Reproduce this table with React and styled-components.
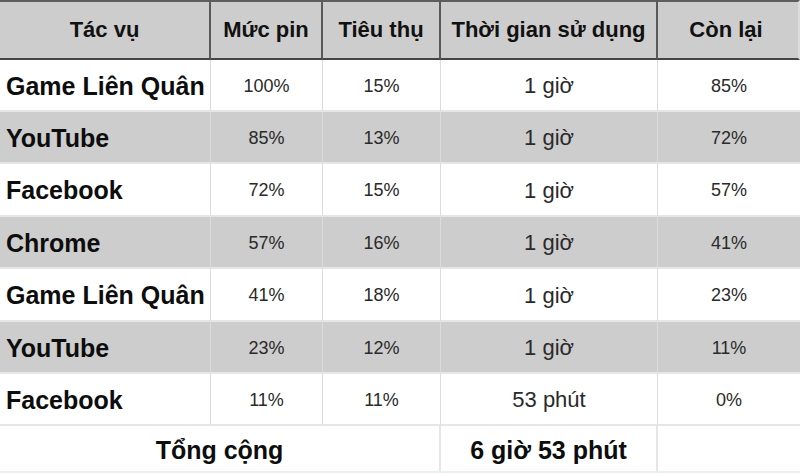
import React from "react";
import styled, { createGlobalStyle, css } from "styled-components";

const Global = createGlobalStyle`
  html, body { margin: 0; padding: 0; background: #ffffff; }
  body { font-family: "Liberation Sans", Arial, sans-serif; }
`;

const Table = styled.div`
  display: grid;
  grid-template-columns: 211px 112px 118px 217px 142px;
  grid-template-rows: 60px 52px 52px 53px 52px 53px 52px 52px 1fr;
  width: 800px;
  height: 473px;
  overflow: hidden;
`;

const HeadCell = styled.div`
  display: flex;
  align-items: center;
  justify-content: center;
  background: #cdcdcd;
  border-top: 2px solid #5e5e5e;
  border-bottom: 2px solid #454545;
  border-right: ${(p) => (p.$last ? "2px solid #dcdcdc" : "2px solid #595959")};
  font-weight: 700;
  font-size: 22px;
  color: #111;
  box-sizing: border-box;
  padding-right: ${(p) => (p.$last ? "4px" : "0")};
`;

const Cell = styled.div`
  display: flex;
  align-items: center;
  justify-content: ${(p) => (p.$name ? "flex-start" : "center")};
  padding-left: ${(p) => (p.$name ? "6px" : "0")};
  padding-top: 2px;
  background: ${(p) => (p.$shade ? "#cdcdcd" : "#ffffff")};
  border-bottom: 2px solid #e6e6e6;
  border-right: ${(p) => (p.$last ? "none" : "1px solid #dcdcdc")};
  box-sizing: border-box;
  color: #2a2a2a;
  font-size: 18px;
  ${(p) =>
    p.$name &&
    css`
      font-weight: 700;
      font-size: 25px;
      color: #0d0d0d;
    `}
  ${(p) =>
    p.$time &&
    css`
      font-size: 22px;
    `}
`;

const FootCell = styled.div`
  grid-column: ${(p) => p.$span || "auto"};
  display: flex;
  align-items: center;
  justify-content: center;
  padding-top: 4px;
  background: #ffffff;
  border-right: ${(p) => (p.$last ? "none" : "2px solid #e6e6e6")};
  border-bottom: 2px solid #eaf0f0;
  box-sizing: border-box;
  font-weight: 700;
  font-size: 25px;
  color: #0d0d0d;
`;

const headers = ["Tác vụ", "Mức pin", "Tiêu thụ", "Thời gian sử dụng", "Còn lại"];

const rows = [
  ["Game Liên Quân", "100%", "15%", "1 giờ", "85%"],
  ["YouTube", "85%", "13%", "1 giờ", "72%"],
  ["Facebook", "72%", "15%", "1 giờ", "57%"],
  ["Chrome", "57%", "16%", "1 giờ", "41%"],
  ["Game Liên Quân", "41%", "18%", "1 giờ", "23%"],
  ["YouTube", "23%", "12%", "1 giờ", "11%"],
  ["Facebook", "11%", "11%", "53 phút", "0%"],
];

export default function App() {
  return (
    <>
      <Global />
      <Table>
        {headers.map((h, i) => (
          <HeadCell key={h} $last={i === headers.length - 1}>
            {h}
          </HeadCell>
        ))}
        {rows.map((r, ri) =>
          r.map((v, ci) => (
            <Cell
              key={ri + "-" + ci}
              $shade={ri % 2 === 1}
              $name={ci === 0}
              $time={ci === 3}
              $last={ci === 4}
            >
              {v}
            </Cell>
          ))
        )}
        <FootCell $span="span 3">Tổng cộng</FootCell>
        <FootCell>6 giờ 53 phút</FootCell>
        <FootCell $last />
      </Table>
    </>
  );
}
